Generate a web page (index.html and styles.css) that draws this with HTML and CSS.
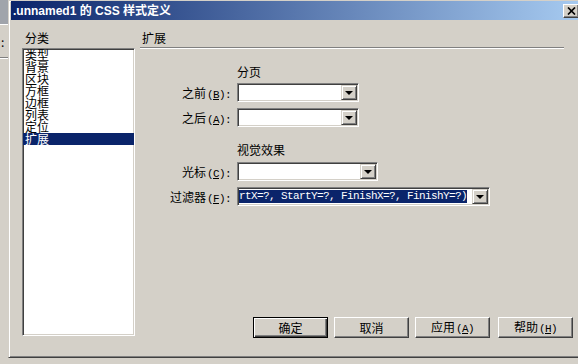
FILE: index.html
```html
<!DOCTYPE html>
<html lang="zh-CN">
<head>
    <meta charset="UTF-8">
    <meta name="viewport" content="width=device-width, initial-scale=1.0">
    <title>.unnamed1 的 CSS 样式定义</title>
    <link rel="stylesheet" href="styles.css">
</head>
<body>
<div class="screen">
    <!-- edge of the window behind the dialog -->
    <div class="behind">
        <div class="behind-title"></div>
        <div class="behind-colon">:</div>
        <div class="behind-rule"></div>
    </div>

    <div class="dialog">
        <div class="titlebar">
            <span class="title">.unnamed1 的 CSS 样式定义</span>
            <button class="close" title="关闭">
                <svg width="9" height="8" viewBox="0 0 9 8"><path d="M1 0.5l7 7M8 0.5l-7 7" stroke="#000" stroke-width="1.7"/></svg>
            </button>
        </div>

        <div class="client">
            <div class="categories">
                <div class="caption">分类</div>
                <ul class="list">
                    <li>类型</li>
                    <li>背景</li>
                    <li>区块</li>
                    <li>方框</li>
                    <li>边框</li>
                    <li>列表</li>
                    <li>定位</li>
                    <li class="selected">扩展</li>
                </ul>
            </div>

            <div class="main">
                <div class="panel-head">扩展</div>

                <div class="group first">分页</div>
                <div class="field f1">
                    <label>之前<span class="key">(<u>B</u>):</span></label>
                    <div class="combo short"><span class="drop"></span></div>
                </div>
                <div class="field">
                    <label>之后<span class="key">(<u>A</u>):</span></label>
                    <div class="combo short"><span class="drop"></span></div>
                </div>

                <div class="group second">视觉效果</div>
                <div class="field f3">
                    <label>光标<span class="key">(<u>C</u>):</span></label>
                    <div class="combo medium"><span class="drop"></span></div>
                </div>
                <div class="field">
                    <label>过滤器<span class="key">(<u>F</u>):</span></label>
                    <div class="combo long">
                        <span class="value">rtX=?, StartY=?, FinishX=?, FinishY=?)</span>
                        <span class="drop"></span>
                    </div>
                </div>

                <div class="buttons">
                    <button class="btn default">确定</button>
                    <button class="btn">取消</button>
                    <button class="btn">应用<span class="key">(<u>A</u>)</span></button>
                    <button class="btn help">帮助<span class="key">(<u>H</u>)</span></button>
                </div>
            </div>
        </div>
    </div>
</div>
</body>
</html>
```

FILE: styles.css
```css
* {
    box-sizing: border-box;
}
html, body {
    margin: 0;
    padding: 0;
}
body {
    width: 578px;
    height: 364px;
    overflow: hidden;
    background-color: #d4d0c8;
    font-family: "Noto Sans CJK SC", "Liberation Sans", sans-serif;
    font-size: 12px;
    color: #000;
}
u {
    text-decoration: underline;
}
.key {
    font-family: "Liberation Mono", monospace;
    font-size: 11px;
    letter-spacing: -0.6px;
    margin-left: 1px;
}
.screen {
    display: flex;
    height: 364px;
}

/* window behind */
.behind {
    width: 8px;
    flex: none;
    display: flex;
    flex-direction: column;
}
.behind-title {
    height: 25px;
    background-color: #a0a4ab;
    border-bottom: 1px solid #fff;
}
.behind-colon {
    margin-top: 11px;
    line-height: 12px;
    padding-left: 1px;
}
.behind-rule {
    margin-top: 9px;
    height: 2px;
    border-top: 1px solid #808080;
    border-bottom: 1px solid #fff;
}

/* dialog frame */
.dialog {
    width: 574px;
    height: 358px;
    flex: none;
    display: flex;
    flex-direction: column;
    border-top: 1px solid #d4d0c8;
    border-left: 1px solid #d4d0c8;
    border-right: 1px solid #404040;
    border-bottom: 1px solid #404040;
    box-shadow: inset 1px 1px #fff, inset -1px -1px #808080;
    padding: 0 2px 1px 2px;
}
.titlebar {
    height: 19px;
    flex: none;
    display: flex;
    align-items: center;
    padding-left: 2px;
    background: linear-gradient(to right, #0a246a, #a6caf0);
}
.title {
    color: #fff;
    font-weight: bold;
    font-family: "Liberation Sans", "Noto Sans CJK SC", sans-serif;
    font-size: 12px;
    line-height: 14px;
}
.close {
    margin-left: auto;
    margin-top: 1px;
    width: 16px;
    height: 14px;
    padding: 0;
    display: flex;
    align-items: center;
    justify-content: center;
    background-color: #d4d0c8;
    border: 1px solid;
    border-color: #fff #404040 #404040 #fff;
    box-shadow: inset -1px -1px #808080;
}

.client {
    flex: 1;
    display: flex;
}

/* category list */
.categories {
    width: 113px;
    margin-left: 11px;
    padding-top: 11px;
    flex: none;
}
.caption {
    line-height: 14px;
    padding-left: 3px;
}
.list {
    list-style: none;
    margin: 3px 0 0;
    padding: 0;
    height: 288px;
    background-color: #fff;
    border: 1px solid;
    border-color: #808080 #fff #fff #808080;
    box-shadow: inset 1px 1px #404040, inset -1px -1px #d4d0c8;
}
.list li {
    height: 12px;
    line-height: 12px;
    padding-left: 2px;
}
.list li.selected {
    background-color: #0a246a;
    color: #fff;
}

/* right side */
.main {
    flex: 1;
    display: flex;
    flex-direction: column;
    margin-left: 5px;
    padding-right: 6px;
}
.panel-head {
    margin-top: 11px;
    margin-right: 9px;
    height: 17px;
    line-height: 14px;
    padding-left: 2px;
    border-bottom: 1px solid #808080;
    box-shadow: 0 1px #fff;
}
.group {
    padding-left: 97px;
    line-height: 14px;
}
.group.first {
    margin-top: 17px;
}
.group.second {
    margin-top: 16px;
}
.field {
    display: flex;
    align-items: center;
    height: 19px;
    margin-top: 6px;
}
.field.f1 {
    margin-top: 4px;
}
.field.f3 {
    margin-top: 5px;
}
.field label {
    width: 91px;
    margin-right: 6px;
    text-align: right;
    white-space: nowrap;
}
.combo {
    height: 19px;
    display: flex;
    align-items: center;
    padding: 1px;
    background-color: #fff;
    border: 1px solid;
    border-color: #808080 #fff #fff #808080;
    box-shadow: inset 1px 1px #404040, inset -1px -1px #d4d0c8;
}
.combo.short {
    width: 122px;
}
.combo.medium {
    width: 141px;
}
.combo.long {
    width: 253px;
}
.value {
    height: 13px;
    line-height: 13px;
    white-space: nowrap;
    overflow: hidden;
    background-color: #0a246a;
    color: #fff;
    font-family: "Liberation Mono", monospace;
    font-size: 11px;
    letter-spacing: -0.6px;
}
.drop {
    margin-left: auto;
    width: 16px;
    height: 15px;
    flex: none;
    display: flex;
    align-items: center;
    justify-content: center;
    background-color: #d4d0c8;
    border: 1px solid;
    border-color: #d4d0c8 #404040 #404040 #d4d0c8;
    box-shadow: inset 1px 1px #fff, inset -1px -1px #808080;
}
.drop::after {
    content: "";
    border-left: 4px solid transparent;
    border-right: 4px solid transparent;
    border-top: 4px solid #000;
    margin-top: 1px;
}

/* dialog buttons */
.buttons {
    margin-top: auto;
    margin-bottom: 18px;
    display: flex;
    justify-content: flex-end;
    gap: 6px;
}
.btn {
    width: 75px;
    height: 21px;
    padding: 0;
    font-family: "Noto Sans CJK SC", "Liberation Sans", sans-serif;
    font-size: 12px;
    line-height: 14px;
    color: #000;
    background-color: #d4d0c8;
    border: 1px solid;
    border-color: #fff #404040 #404040 #fff;
    box-shadow: inset -1px -1px #808080;
}
.btn.default {
    border-color: #000;
    box-shadow: inset 1px 1px #fff, inset -1px -1px #404040, inset -2px -2px #808080;
}
.btn.help {
    margin-left: 2px;
}
```
